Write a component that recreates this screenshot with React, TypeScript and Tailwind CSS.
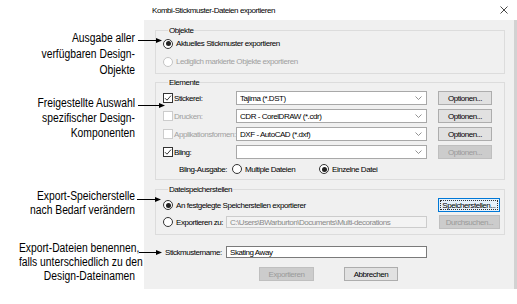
import React from 'react';

const Radio = ({ checked = false, disabled = false }: { checked?: boolean; disabled?: boolean }) => (
  <span
    className={`w-[10px] h-[10px] rounded-full border bg-white flex items-center justify-center shrink-0 ${
      disabled ? 'border-[#c4c4c4]' : 'border-[#333333]'
    }`}
  >
    {checked && <span className="w-[5px] h-[5px] rounded-full bg-[#222222]" />}
  </span>
);

const Check = ({ checked = false, disabled = false }: { checked?: boolean; disabled?: boolean }) => (
  <span
    className={`w-[10px] h-[10px] border bg-white flex items-center justify-center shrink-0 ${
      disabled ? 'border-[#cccccc]' : 'border-[#333333]'
    }`}
  >
    {checked && (
      <svg width="8" height="8" viewBox="0 0 8 8">
        <path d="M1 4.2 L3 6.2 L7 1.6" stroke="#222" strokeWidth="0.9" fill="none" />
      </svg>
    )}
  </span>
);

const Combo = ({ value }: { value: string }) => (
  <div className="w-[191px] h-[14px] bg-white border border-[#a8a8a8] flex items-center pl-[3px] pr-[4px] text-black">
    <span className="flex-1 truncate">{value}</span>
    <svg width="7" height="4" viewBox="0 0 7 4">
      <path d="M0.5 0.5 L3.5 3.5 L6.5 0.5" stroke="#777" strokeWidth="0.8" fill="none" />
    </svg>
  </div>
);

const Btn = ({ label, disabled = false, w }: { label: string; disabled?: boolean; w: string }) => (
  <div
    className={`${w} h-[14px] border flex items-center justify-center ${
      disabled ? 'bg-[#cccccc] border-[#bfbfbf] text-[#9a9a9a]' : 'bg-[#e1e1e1] border-[#adadad] text-black'
    }`}
  >
    {label}
  </div>
);

function ElementRow({
  label,
  checked,
  disabled,
  value,
  btnDisabled,
}: {
  label: string;
  checked: boolean;
  disabled?: boolean;
  value: string;
  btnDisabled?: boolean;
}) {
  return (
    <div className="h-[14px] flex items-center">
      <div className="w-[73px] flex items-center gap-[1px] overflow-hidden">
        <Check checked={checked} disabled={disabled} />
        <span className={disabled ? 'text-[#a0a0a0]' : 'text-black'}>{label}</span>
      </div>
      <Combo value={value} />
      <div className="ml-[11px]">
        <Btn label="Optionen..." disabled={btnDisabled} w="w-[54px]" />
      </div>
    </div>
  );
}

export default function App() {
  return (
    <div className="w-[517px] h-[304px] bg-white flex relative overflow-hidden font-['Liberation_Sans',Arial,sans-serif]">
      {/* Annotations */}
      <div className="w-[144px] shrink-0 flex flex-col pr-[9px] text-[12px] text-black whitespace-nowrap">
        <div className="mt-[30px] leading-[16px] text-right origin-right scale-x-[0.86]">
          <div>Ausgabe aller</div>
          <div>verfügbaren Design-</div>
          <div>Objekte</div>
        </div>
        <div className="mt-[18px] leading-[15px] text-right origin-right scale-x-[0.86]">
          <div>Freigestellte Auswahl</div>
          <div>spezifischer Design-</div>
          <div>Komponenten</div>
        </div>
        <div className="mt-[48px] leading-[14px] text-right origin-right scale-x-[0.86]">
          <div>Export-Speicherstelle</div>
          <div>nach Bedarf verändern</div>
        </div>
        <div className="mt-[24px] leading-[14px] text-right origin-right scale-x-[0.86]">
          <div>Export-Dateien benennen,</div>
          <div>falls unterschiedlich zu den</div>
          <div>Design-Dateinamen</div>
        </div>
      </div>

      {/* Arrows */}
      <svg className="absolute left-0 top-0 pointer-events-none" width="517" height="304">
        {[
          [138, 162, 40.5],
          [138, 165, 105.5],
          [137, 161, 199.5],
          [139, 162, 252.5],
        ].map(([x1, x2, y], i) => (
          <g key={i}>
            <line x1={x1} y1={y} x2={x2 - 4} y2={y} stroke="#000" strokeWidth="1" />
            <path d={`M${x2} ${y} L${x2 - 6} ${y - 2.5} L${x2 - 6} ${y + 2.5} Z`} fill="#000" />
          </g>
        ))}
      </svg>

      {/* Dialog */}
      <div className="w-[373px] h-[289px] flex flex-col text-[8px] leading-[11px] tracking-[-0.45px] whitespace-nowrap">
        <div className="h-[20px] bg-white flex items-center pl-[8px] pr-[9px] text-black">
          <span className="flex-1">Kombi-Stickmuster-Dateien exportieren</span>
          <svg width="8" height="8" viewBox="0 0 8 8">
            <path d="M0.5 0.5 L7.5 7.5 M7.5 0.5 L0.5 7.5" stroke="#333" strokeWidth="0.9" />
          </svg>
        </div>
        <div className="flex-1 bg-[#f0f0f0] border-r-[3px] border-[#d2d2d2] pl-[11px] pr-[9px] pt-[5px] flex flex-col">
          {/* Objekte */}
          <fieldset className="border border-[#dcdcdc] pl-[7px] pt-[1px] pb-[5px] flex flex-col gap-[5px]">
            <legend className="ml-[5px] px-[1px] text-black">Objekte</legend>
            <div className="h-[13px] flex items-center gap-[3px] text-black">
              <Radio checked />
              <span>Aktuelles Stickmuster exportieren</span>
            </div>
            <div className="h-[13px] flex items-center gap-[3px] text-[#a0a0a0]">
              <Radio disabled />
              <span>Lediglich markierte Objekte exportieren</span>
            </div>
          </fieldset>

          {/* Elemente */}
          <fieldset className="mt-[3px] border border-[#dcdcdc] pl-[7px] pt-[3px] pb-[4px] flex flex-col gap-[4px]">
            <legend className="ml-[5px] px-[1px] text-black">Elemente</legend>
            <ElementRow label="Stickerei:" checked value="Tajima (*.DST)" />
            <ElementRow label="Drucken:" checked={false} disabled value="CDR - CorelDRAW (*.cdr)" />
            <ElementRow label="Applikationsformen:" checked={false} disabled value="DXF - AutoCAD (*.dxf)" />
            <ElementRow label="Bling:" checked value="" btnDisabled />
            <div className="h-[12px] flex items-center text-black">
              <span className="w-[69px] text-right pr-[5px]">Bling-Ausgabe:</span>
              <div className="w-[87px] flex items-center gap-[3px]">
                <Radio />
                <span>Multiple Dateien</span>
              </div>
              <div className="flex items-center gap-[3px]">
                <Radio checked />
                <span>Einzelne Datei</span>
              </div>
            </div>
          </fieldset>

          {/* Dateispeicherstellen */}
          <fieldset className="mt-[4px] border border-[#dcdcdc] pl-[7px] pr-[4px] pt-[3px] pb-[5px] flex flex-col gap-[3px]">
            <legend className="ml-[5px] px-[1px] text-black">Dateispeicherstellen</legend>
            <div className="h-[14px] flex items-center text-black">
              <Radio checked />
              <span className="ml-[3px]">An festgelegte Speicherstellen exportierer</span>
              <div className="ml-auto w-[62px] h-[14px] border border-[#0078d7] bg-[#e5f1fb] p-[1px]">
                <div className="w-full h-full border border-dotted border-[#333] flex items-center justify-center">
                  Speicherstellen...
                </div>
              </div>
            </div>
            <div className="h-[14px] flex items-center">
              <Radio />
              <span className="ml-[3px] w-[50px] text-black">Exportieren zu:</span>
              <div className="w-[201px] h-[12px] border border-[#cccccc] bg-[#f3f3f3] pl-[3px] flex items-center text-[#8a8a8a] overflow-hidden">
                C:\Users\BWarburton\Documents\Multi-decorations
              </div>
              <div className="ml-auto">
                <Btn label="Durchsuchen..." disabled w="w-[61px]" />
              </div>
            </div>
          </fieldset>

          {/* Stickmustername */}
          <div className="mt-[11px] h-[12px] flex items-center pl-[10px] text-black">
            <span className="w-[61px]">Stickmustername:</span>
            <div className="w-[201px] h-[12px] bg-white border border-[#7a7a7a] pl-[3px] flex items-center">
              Skating Away
            </div>
          </div>

          {/* Actions */}
          <div className="mt-[9px] flex pl-[104px] gap-[30px]">
            <Btn label="Exportieren" disabled w="w-[55px]" />
            <Btn label="Abbrechen" w="w-[54px]" />
          </div>
        </div>
      </div>
    </div>
  );
}
